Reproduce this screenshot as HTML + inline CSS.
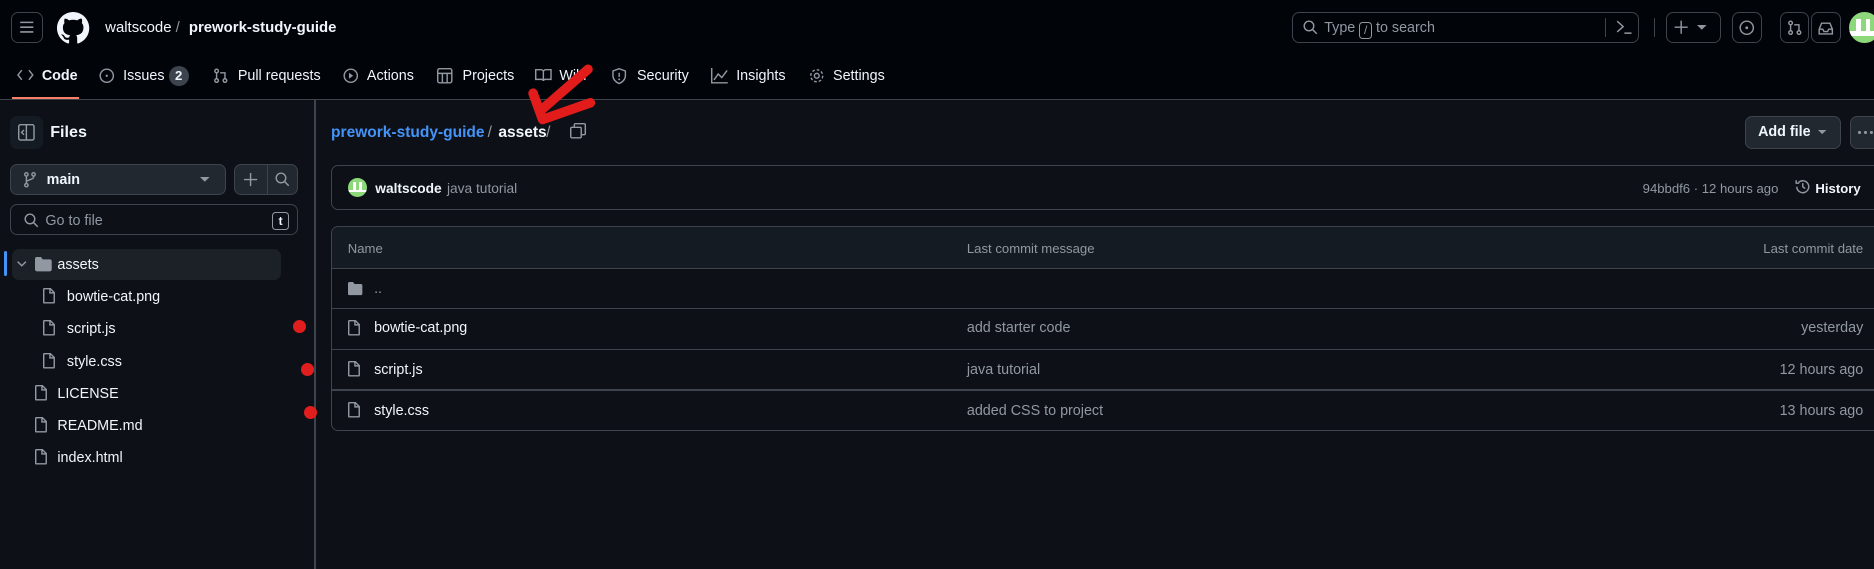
<!DOCTYPE html>
<html><head><meta charset="utf-8"><style>
html,body{margin:0;padding:0;background:#0d1117;overflow:hidden;width:1874px;height:569px}
#w{position:relative;width:1568px;height:476px;zoom:1.19515;font-family:"Liberation Sans",sans-serif;color:#f0f6fc;font-size:12px;overflow:hidden}
.a{position:absolute}
.t{position:absolute;white-space:nowrap;line-height:16px}
.r{position:absolute;white-space:nowrap;line-height:16px;right:9px}
.btn{position:absolute;border:1px solid #3d444d;border-radius:6px;box-sizing:border-box}
svg{position:absolute;overflow:visible}
.g{color:#9198a1}
.ic{fill:none;stroke:#9198a1;stroke-width:1.2}
.hl{position:absolute;left:0;right:0;height:1px;background:#3d444d}
</style></head><body><div id="w">
<!-- header -->
<div class="a" style="left:0;top:0;width:1568px;height:83px;background:#010409;border-bottom:1px solid #3d444d"></div>
<div class="btn" style="left:9px;top:10px;width:27px;height:26px"></div>
<svg style="left:16px;top:17px" width="13" height="12"><path d="M1 2h11M1 6h11M1 10h11" stroke="#9198a1" stroke-width="1.3"/></svg>
<svg style="left:48px;top:10px" width="27" height="27" viewBox="0 0 16 16"><path fill="#f0f6fc" d="M8 0C3.58 0 0 3.58 0 8c0 3.54 2.29 6.53 5.47 7.59.4.07.55-.17.55-.38 0-.19-.01-.82-.01-1.490-2.010.37-2.53-.49-2.69-.94-.09-.23-.48-.94-.82-1.130-.28-.15-.68-.52-.01-.53.63-.01 1.080.58 1.230.82.72 1.21 1.870.87 2.330.66.07-.52.28-.87.51-1.070-1.780-.2-3.640-.89-3.640-3.950 0-.87.31-1.59.82-2.150-.08-.2-.36-1.020.08-2.120 0 0 .67-.21 2.2.82.64-.18 1.32-.27 2-.27.68 0 1.36.09 2 .27 1.53-1.04 2.2-.82 2.2-.82.44 1.1.16 1.92.08 2.12.51.56.82 1.27.82 2.15 0 3.07-1.87 3.75-3.65 3.95.29.25.54.73.54 1.48 0 1.07-.01 1.93-.01 2.2 0 .21.15.46.55.38A8.013 8.013 0 0016 8c0-4.42-3.58-8-8-8z"/></svg>
<div class="t" style="left:88px;top:15px;font-size:12.5px">waltscode</div>
<div class="t g" style="left:147px;top:15px;font-size:12.5px">/</div>
<div class="t" style="left:158px;top:15px;font-size:12.5px;font-weight:bold">prework-study-guide</div>
<div class="btn" style="left:1081px;top:10px;width:290px;height:26px"></div>
<svg style="left:1090px;top:17px" width="12" height="12"><circle cx="5" cy="5" r="4" class="ic"/><path d="M8 8l3.5 3.5" class="ic"/></svg>
<div class="t g" style="left:1108px;top:16px;font-size:12px">Type <span style="display:inline-block;border:1px solid #9198a1;border-radius:3px;width:9px;height:12px;line-height:12px;text-align:center;font-size:10px;vertical-align:-2px">/</span> to search</div>
<div class="a" style="left:1343px;top:15px;width:1px;height:16px;background:#3d444d"></div>
<svg style="left:1352px;top:17px" width="14" height="12"><path d="M1 1l5 4.5L1 10M7 11h6" class="ic"/></svg>
<div class="a" style="left:1384px;top:15px;width:1px;height:16px;background:#3d444d"></div>
<div class="btn" style="left:1394px;top:10px;width:46px;height:26px"></div>
<svg style="left:1401px;top:17px" width="12" height="12"><path d="M6 0.5v11M0.5 6h11" class="ic"/></svg>
<svg style="left:1420px;top:21px" width="8" height="5"><path d="M0 0h8L4 4z" fill="#9198a1"/></svg>
<div class="btn" style="left:1449px;top:10px;width:25px;height:26px"></div>
<svg style="left:1455px;top:17px" width="13" height="13"><circle cx="6.5" cy="6.5" r="5.5" class="ic"/><circle cx="6.5" cy="6.5" r="1.2" fill="#9198a1"/></svg>
<div class="btn" style="left:1489px;top:10px;width:25px;height:26px"></div>
<svg style="left:1495px;top:17px" width="13" height="13"><circle cx="3" cy="2.5" r="1.5" class="ic"/><circle cx="3" cy="10.5" r="1.5" class="ic"/><circle cx="10" cy="10.5" r="1.5" class="ic"/><path d="M3 4v5M10 9V4H6" class="ic"/></svg>
<div class="btn" style="left:1515px;top:10px;width:25px;height:26px"></div>
<svg style="left:1521px;top:18px" width="13" height="11"><path d="M1 6l2-5h7l2 5v4H1zM1 6h3l1 2h3l1-2h3" class="ic"/></svg>
<div class="a" style="left:1547px;top:10px;width:26px;height:26px;border-radius:50%;background:#8cd87a;overflow:hidden"><div class="a" style="left:6px;top:6px;width:4px;height:10px;background:#fff"></div><div class="a" style="left:14px;top:6px;width:4px;height:10px;background:#fff"></div><div class="a" style="left:0;top:16px;width:26px;height:4px;background:#fff"></div></div>
<!-- tabs -->
<svg style="left:14px;top:58px" width="14" height="10"><path d="M4 1L0.8 5 4 9M10 1l3.2 4L10 9" class="ic"/></svg>
<div class="t" style="left:35px;top:56px;font-weight:bold">Code</div>
<div class="a" style="left:10px;top:81px;width:56px;height:2px;background:#f78166"></div>
<svg style="left:83px;top:57px" width="13" height="13"><circle cx="6.5" cy="6.5" r="5.5" class="ic"/><circle cx="6.5" cy="6.5" r="1" fill="#9198a1"/></svg>
<div class="t" style="left:103px;top:56px">Issues</div>
<div class="a" style="left:141px;top:55px;width:17px;height:17px;border-radius:9px;background:#3d444d;text-align:center;line-height:17px;font-size:11px;font-weight:bold">2</div>
<svg style="left:178px;top:57px" width="13" height="13"><circle cx="3" cy="2.5" r="1.5" class="ic"/><circle cx="3" cy="10.5" r="1.5" class="ic"/><circle cx="10" cy="10.5" r="1.5" class="ic"/><path d="M3 4v5M10 9V4H6" class="ic"/></svg>
<div class="t" style="left:199px;top:56px">Pull requests</div>
<svg style="left:287px;top:57px" width="13" height="13"><circle cx="6.5" cy="6.5" r="5.5" class="ic"/><path d="M5 4l3.5 2.5L5 9z" fill="#9198a1"/></svg>
<div class="t" style="left:307px;top:56px">Actions</div>
<svg style="left:366px;top:57px" width="13" height="13"><rect x="0.6" y="0.6" width="11.8" height="11.8" rx="1.5" class="ic"/><path d="M0.6 4.5h11.8M4.5 4.5v8M8.5 4.5v8" class="ic"/></svg>
<div class="t" style="left:387px;top:56px">Projects</div>
<svg style="left:448px;top:58px" width="14" height="11"><path d="M0.6 0.6h4.5c1 0 1.9.8 1.9 1.8V10c0-.8-.6-1.3-1.5-1.3H0.6zM13.4 0.6H8.9C7.9.6 7 1.4 7 2.4V10c0-.8.6-1.3 1.5-1.3h4.9z" class="ic"/></svg>
<div class="t" style="left:468px;top:56px">Wiki</div>
<svg style="left:512px;top:57px" width="12" height="14"><path d="M6 0.6L0.8 2.5v4c0 3 2.4 5.4 5.2 6.5 2.8-1.1 5.2-3.5 5.2-6.5v-4z" class="ic"/><path d="M6 4v3.5" class="ic"/><circle cx="6" cy="9.5" r=".8" fill="#9198a1"/></svg>
<div class="t" style="left:533px;top:56px">Security</div>
<svg style="left:595px;top:57px" width="14" height="13"><path d="M0.6 0v12.4H14M2.5 10l3.5-5 3 3 4.5-6" class="ic"/></svg>
<div class="t" style="left:616px;top:56px">Insights</div>
<svg style="left:677px;top:57px" width="13" height="13"><circle cx="6.5" cy="6.5" r="2" class="ic"/><circle cx="6.5" cy="6.5" r="5" class="ic" stroke-dasharray="2.2 1.7" stroke-width="2.2"/></svg>
<div class="t" style="left:697px;top:56px">Settings</div>
<!-- sidebar -->
<div class="a" style="left:263px;top:84px;width:1px;height:392px;background:#3d444d"></div>
<div class="a" style="left:8px;top:97px;width:28px;height:28px;border-radius:6px;background:#151b23"></div>
<svg style="left:15px;top:104px" width="14" height="14"><rect x="0.6" y="0.6" width="12.8" height="12.8" rx="1.5" class="ic"/><path d="M7 0.6v12.8M5 5L3 7l2 2" class="ic"/></svg>
<div class="t" style="left:42px;top:103px;font-size:13.5px;font-weight:bold">Files</div>
<div class="btn" style="left:8px;top:137px;width:181px;height:26px;background:#212830"></div>
<svg style="left:20px;top:144px" width="10" height="13"><circle cx="2" cy="2" r="1.4" class="ic"/><circle cx="2" cy="11" r="1.4" class="ic"/><circle cx="8" cy="2" r="1.4" class="ic"/><path d="M2 3.4v6M8 3.4v1c0 2-6 2-6 4" class="ic"/></svg>
<div class="t" style="left:39px;top:143px;font-weight:bold">main</div>
<svg style="left:167px;top:148px" width="8" height="5"><path d="M0 0h8L4 4z" fill="#9198a1"/></svg>
<div class="btn" style="left:196px;top:137px;width:53px;height:26px;background:#212830"></div>
<div class="a" style="left:223px;top:138px;width:1px;height:24px;background:#3d444d"></div>
<svg style="left:204px;top:145px" width="11" height="11"><path d="M5.5 0v11M0 5.5h11" class="ic"/></svg>
<svg style="left:230px;top:144px" width="12" height="12"><circle cx="5" cy="5" r="4" class="ic"/><path d="M8 8l3.5 3.5" class="ic"/></svg>
<div class="btn" style="left:8px;top:171px;width:241px;height:26px"></div>
<svg style="left:20px;top:178px" width="12" height="12"><circle cx="5" cy="5" r="4" class="ic"/><path d="M8 8l3.5 3.5" class="ic"/></svg>
<div class="t g" style="left:38px;top:177px">Go to file</div>
<div class="a" style="left:228px;top:177px;width:12px;height:14px;border:1px solid #9198a1;border-radius:3px;text-align:center;line-height:14px;font-size:10px;font-weight:bold;color:#f0f6fc">t</div>
<div class="a" style="left:3px;top:210px;width:3px;height:21px;border-radius:2px;background:#4493f8"></div>
<div class="a" style="left:10px;top:208px;width:225px;height:26px;border-radius:6px;background:#1c2128"></div>
<svg style="left:14px;top:218px" width="8" height="5"><path d="M0.5 0.5l3.5 3.5 3.5-3.5" class="ic"/></svg>
<svg style="left:29px;top:215px" width="14" height="12"><path d="M0 1.5C0 .7.6 0 1.5 0h3.5l1.5 2H12.5c.8 0 1.5.7 1.5 1.5V10.5c0 .8-.7 1.5-1.5 1.5h-11C.7 12 0 11.3 0 10.5z" fill="#9198a1"/></svg>
<div class="t" style="left:48px;top:214px">assets</div>
<svg style="left:36px;top:241px" width="10" height="13"><path d="M0.6 1.2c0-.4.3-.6.6-.6h5l3.2 3.2v8c0 .3-.3.6-.6.6H1.2c-.3 0-.6-.3-.6-.6zM5.8 .6v3.5h3.6" class="ic"/></svg>
<div class="t" style="left:56px;top:241px">bowtie-cat.png</div>
<svg style="left:36px;top:268px" width="10" height="13"><path d="M0.6 1.2c0-.4.3-.6.6-.6h5l3.2 3.2v8c0 .3-.3.6-.6.6H1.2c-.3 0-.6-.3-.6-.6zM5.8 .6v3.5h3.6" class="ic"/></svg>
<div class="t" style="left:56px;top:268px">script.js</div>
<svg style="left:36px;top:295px" width="10" height="13"><path d="M0.6 1.2c0-.4.3-.6.6-.6h5l3.2 3.2v8c0 .3-.3.6-.6.6H1.2c-.3 0-.6-.3-.6-.6zM5.8 .6v3.5h3.6" class="ic"/></svg>
<div class="t" style="left:56px;top:295px">style.css</div>
<svg style="left:29px;top:322px" width="10" height="13"><path d="M0.6 1.2c0-.4.3-.6.6-.6h5l3.2 3.2v8c0 .3-.3.6-.6.6H1.2c-.3 0-.6-.3-.6-.6zM5.8 .6v3.5h3.6" class="ic"/></svg>
<div class="t" style="left:48px;top:322px">LICENSE</div>
<svg style="left:29px;top:349px" width="10" height="13"><path d="M0.6 1.2c0-.4.3-.6.6-.6h5l3.2 3.2v8c0 .3-.3.6-.6.6H1.2c-.3 0-.6-.3-.6-.6zM5.8 .6v3.5h3.6" class="ic"/></svg>
<div class="t" style="left:48px;top:349px">README.md</div>
<svg style="left:29px;top:376px" width="10" height="13"><path d="M0.6 1.2c0-.4.3-.6.6-.6h5l3.2 3.2v8c0 .3-.3.6-.6.6H1.2c-.3 0-.6-.3-.6-.6zM5.8 .6v3.5h3.6" class="ic"/></svg>
<div class="t" style="left:48px;top:376px">index.html</div>
<div class="a" style="left:245px;top:268px;width:11px;height:11px;border-radius:50%;background:#e01e1e"></div>
<div class="a" style="left:252px;top:304px;width:11px;height:11px;border-radius:50%;background:#e01e1e"></div>
<div class="a" style="left:254px;top:340px;width:11px;height:11px;border-radius:50%;background:#e01e1e"></div>
<!-- main -->
<div class="t" style="left:277px;top:103px;font-size:13px;font-weight:bold;color:#4493f8">prework-study-guide</div>
<div class="t g" style="left:408px;top:103px;font-size:13px">/</div>
<div class="t" style="left:417px;top:103px;font-size:13px;font-weight:bold">assets</div>
<div class="t g" style="left:457px;top:103px;font-size:13px">/</div>
<svg style="left:477px;top:103px" width="13" height="13"><rect x="0.6" y="3.6" width="8.8" height="8.8" rx="1" class="ic"/><path d="M3.6 3.6V1.6c0-.6.4-1 1-1h7.2c.6 0 1 .4 1 1v7.2c0 .6-.4 1-1 1H9.4" class="ic"/></svg>
<svg style="left:0;top:0" width="1568" height="476"><path d="M492 58L453 92M446 78L454 100L494 86" fill="none" stroke="#e21b1b" stroke-width="8" stroke-linecap="round" stroke-linejoin="round"/></svg>
<div class="btn" style="left:1460px;top:97px;width:80px;height:28px;background:#212830"></div>
<div class="t" style="left:1471px;top:103px;font-weight:bold">Add file</div>
<svg style="left:1521px;top:109px" width="7" height="4"><path d="M0 0h7L3.5 3.5z" fill="#9198a1"/></svg>
<div class="btn" style="left:1548px;top:97px;width:30px;height:28px;background:#212830"></div>
<div class="a" style="left:1555px;top:110px;width:2px;height:2px;border-radius:1px;background:#9198a1;box-shadow:5px 0 #9198a1,10px 0 #9198a1"></div>
<div class="btn" style="left:277px;top:138px;width:1300px;height:38px"></div>
<div class="a" style="left:291px;top:149px;width:16px;height:16px;border-radius:50%;background:#8cd87a;overflow:hidden"><div class="a" style="left:4px;top:3px;width:3px;height:7px;background:#fff"></div><div class="a" style="left:9px;top:3px;width:3px;height:7px;background:#fff"></div><div class="a" style="left:0;top:10px;width:16px;height:2px;background:#fff"></div></div>
<div class="t" style="left:314px;top:150px;font-weight:bold;font-size:11.5px">waltscode</div>
<div class="t g" style="left:374px;top:150px;font-size:11.5px">java tutorial</div>
<div class="t g" style="right:80px;top:150px;font-size:11px">94bbdf6 · 12 hours ago</div>
<svg style="left:1502px;top:150px" width="13" height="13"><path d="M1.5 6.5a5 5 0 1 0 1.5-3.6M1 1v2.5h2.5M6.5 3.5v3l2 1.5" class="ic"/></svg>
<div class="t" style="left:1519px;top:150px;font-weight:bold;font-size:11px">History</div>
<div class="btn" style="left:277px;top:189px;width:1300px;height:172px;overflow:hidden">
<div class="a" style="left:0;top:0;right:0;height:34px;background:#151b23;border-bottom:1px solid #3d444d"></div>
<div class="hl" style="top:68px"></div><div class="hl" style="top:102px"></div><div class="hl" style="top:136px"></div>
</div>
<div class="t g" style="left:291px;top:200px;font-size:11px">Name</div>
<div class="t g" style="left:809px;top:200px;font-size:11px">Last commit message</div>
<div class="r g" style="top:200px;font-size:11px">Last commit date</div>
<svg style="left:291px;top:236px" width="12" height="11"><path d="M0 1.2C0 .5.5 0 1.2 0h3l1.3 1.7h5.3c.7 0 1.2.5 1.2 1.2v7c0 .6-.5 1.1-1.2 1.1H1.2C.5 11 0 10.5 0 9.9z" fill="#9198a1"/></svg>
<div class="t g" style="left:313px;top:234px">..</div>
<svg style="left:291px;top:268px" width="10" height="13"><path d="M0.6 1.2c0-.4.3-.6.6-.6h5l3.2 3.2v8c0 .3-.3.6-.6.6H1.2c-.3 0-.6-.3-.6-.6zM5.8 .6v3.5h3.6" class="ic"/></svg>
<div class="t" style="left:313px;top:267px">bowtie-cat.png</div>
<div class="t g" style="left:809px;top:267px">add starter code</div>
<div class="r g" style="top:267px">yesterday</div>
<svg style="left:291px;top:302px" width="10" height="13"><path d="M0.6 1.2c0-.4.3-.6.6-.6h5l3.2 3.2v8c0 .3-.3.6-.6.6H1.2c-.3 0-.6-.3-.6-.6zM5.8 .6v3.5h3.6" class="ic"/></svg>
<div class="t" style="left:313px;top:302px">script.js</div>
<div class="t g" style="left:809px;top:302px">java tutorial</div>
<div class="r g" style="top:302px">12 hours ago</div>
<svg style="left:291px;top:336px" width="10" height="13"><path d="M0.6 1.2c0-.4.3-.6.6-.6h5l3.2 3.2v8c0 .3-.3.6-.6.6H1.2c-.3 0-.6-.3-.6-.6zM5.8 .6v3.5h3.6" class="ic"/></svg>
<div class="t" style="left:313px;top:336px">style.css</div>
<div class="t g" style="left:809px;top:336px">added CSS to project</div>
<div class="r g" style="top:336px">13 hours ago</div>
</div></body></html>
